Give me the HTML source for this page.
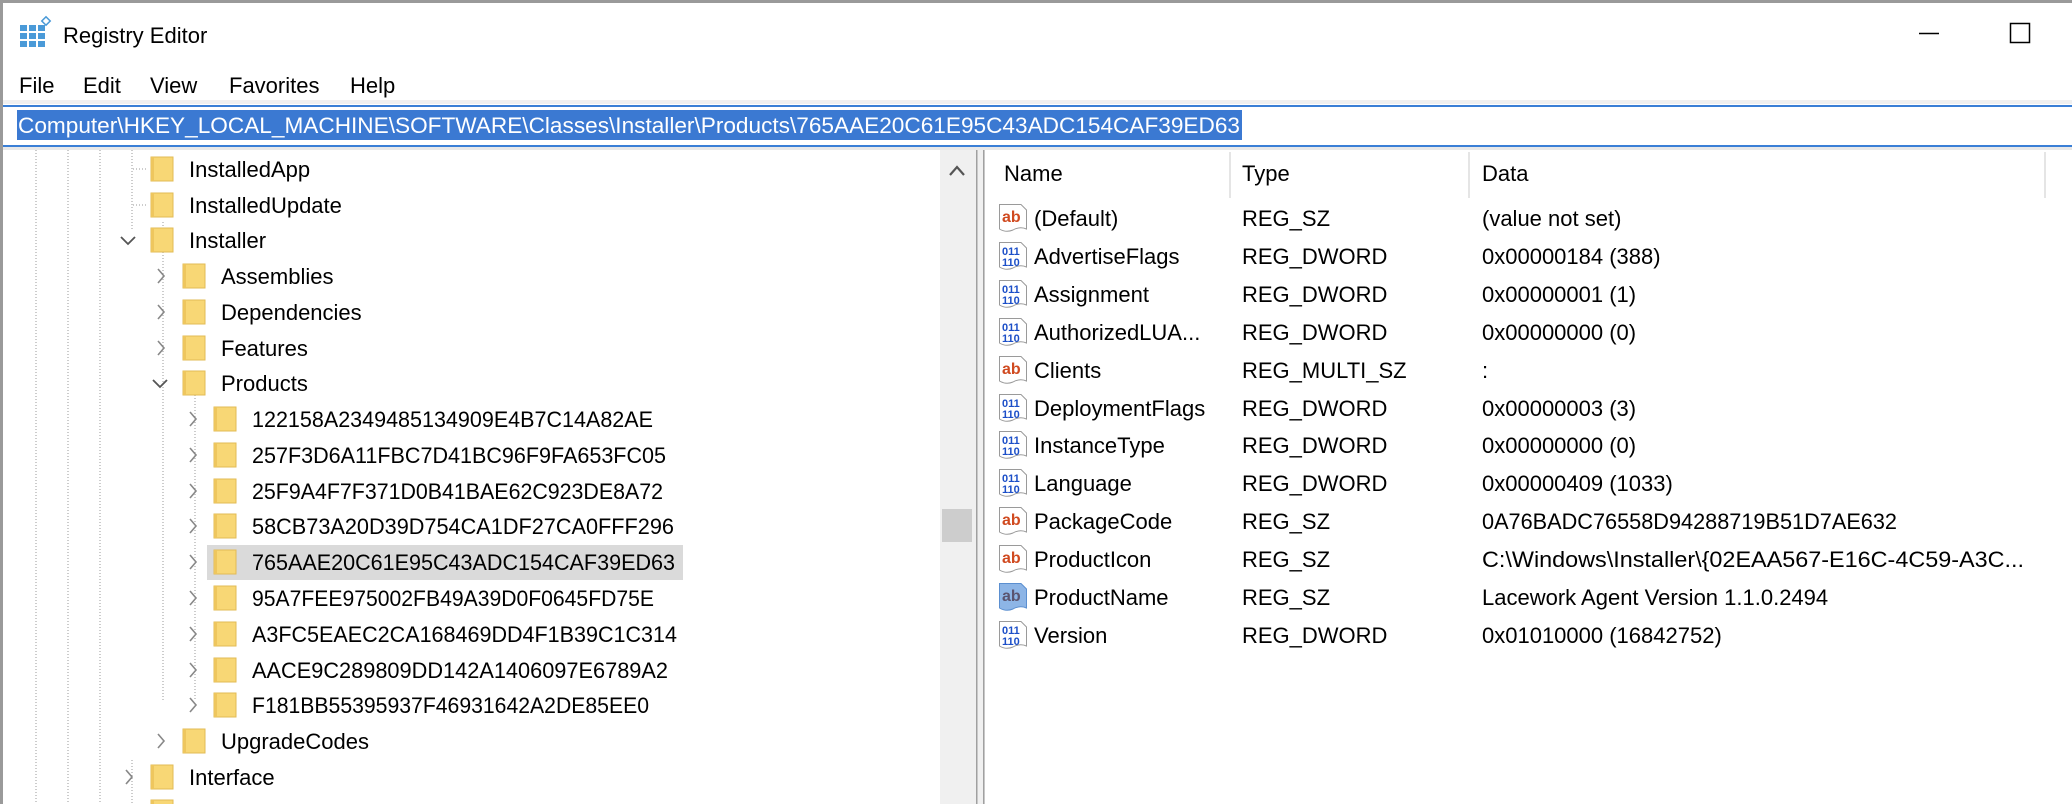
<!DOCTYPE html>
<html><head><meta charset="utf-8"><style>
html,body{margin:0;padding:0;background:#fff;overflow:hidden}
svg{display:block}
text{font-family:"Liberation Sans",sans-serif;font-size:22px;fill:#000}
</style></head><body>
<svg width="2072" height="804" viewBox="0 0 2072 804" xmlns="http://www.w3.org/2000/svg">
<defs>
<g id="fold"><rect x="0" y="-12" width="22" height="24" fill="#f8d775" stroke="#e2bb55" stroke-width="1"/><rect x="0" y="-12" width="3" height="24" fill="#eec65e"/></g>
<g id="chev"><path d="M-3,-7 L3,0 L-3,7" fill="none" stroke="#888" stroke-width="1.6"/></g>
<g id="abi"><path d="M0.5,-13.5 H22 L27.5,-8 V11 Q21,8 14,12 Q7,15 0.5,11 Z" fill="#fff" stroke="#9a9a9a" stroke-width="1"/><text x="3" y="4" style="font-size:16px;font-weight:bold;fill:#d04a20">ab</text></g>
<g id="abb"><path d="M0.5,-13.5 H22 L27.5,-8 V11 Q21,8 14,12 Q7,15 0.5,11 Z" fill="#8db5e6" stroke="#5b8fd0" stroke-width="1"/><text x="3" y="4" style="font-size:16px;font-weight:bold;fill:#5a5470">ab</text></g>
<g id="bin"><path d="M0.5,-13.5 H22 L27.5,-8 V11 Q21,8 14,12 Q7,15 0.5,11 Z" fill="#fff" stroke="#9a9a9a" stroke-width="1"/><text x="3" y="-1" style="font-size:11px;font-weight:bold;fill:#1c4fc8">011</text><text x="3" y="10" style="font-size:11px;font-weight:bold;fill:#1c4fc8">110</text></g>
</defs>
<!-- window border -->
<rect x="0" y="0" width="2072" height="3" fill="#9a9a9a"/>
<rect x="0" y="0" width="3" height="804" fill="#9a9a9a"/>
<!-- title icon -->
<g fill="#4a9ad8"><rect x="20" y="25" width="7" height="6"/><rect x="29" y="25" width="7" height="6"/><rect x="38" y="25" width="7" height="6"/><rect x="20" y="33" width="7" height="6"/><rect x="29" y="33" width="7" height="6"/><rect x="38" y="33" width="7" height="6"/><rect x="20" y="41" width="7" height="6"/><rect x="29" y="41" width="7" height="6"/><rect x="38" y="41" width="7" height="6"/></g>
<rect x="43" y="18" width="6" height="6" fill="#fff" stroke="#4a9ad8" stroke-width="1.5" transform="rotate(45 46 21)"/>
<text x="63" y="43">Registry Editor</text>
<line x1="1919" y1="33.5" x2="1939" y2="33.5" stroke="#000" stroke-width="1.5"/>
<rect x="2010.5" y="23.5" width="19" height="19" fill="none" stroke="#000" stroke-width="1.5"/>
<!-- menu -->
<text x="19" y="93">File</text><text x="83" y="93">Edit</text><text x="150" y="93">View</text><text x="229" y="93">Favorites</text><text x="350" y="93">Help</text>
<rect x="3" y="100" width="2069" height="4" fill="#f0f0f0"/>
<!-- address bar -->
<rect x="3" y="105" width="2069" height="2" fill="#3a7fd6"/>
<rect x="3" y="145" width="2069" height="2" fill="#3a7fd6"/>
<rect x="17" y="110" width="1225" height="30" fill="#3b79d2"/>
<text x="18" y="133" textLength="1222" lengthAdjust="spacingAndGlyphs" style="fill:#fff">Computer\HKEY_LOCAL_MACHINE\SOFTWARE\Classes\Installer\Products\765AAE20C61E95C43ADC154CAF39ED63</text>
<rect x="3" y="147" width="2069" height="3" fill="#e8e8e8"/>
<!-- tree scrollbar & splitter -->
<rect x="940" y="150" width="35" height="654" fill="#f0f0f0"/>
<path d="M950,175 L957,167 L964,175" fill="none" stroke="#555" stroke-width="2.2"/>
<rect x="942" y="509" width="30" height="33" fill="#cdcdcd"/>
<rect x="975" y="150" width="10" height="654" fill="#f0f0f0"/>
<rect x="976" y="150" width="1.5" height="654" fill="#a0a0a0"/>
<rect x="983" y="150" width="1.5" height="654" fill="#a0a0a0"/>
<!-- dotted tree lines -->
<g stroke="#999" stroke-width="1" stroke-dasharray="1,2">
<line x1="36" y1="150" x2="36" y2="804"/><line x1="68" y1="150" x2="68" y2="804"/><line x1="100" y1="150" x2="100" y2="804"/><line x1="132" y1="150" x2="132" y2="230"/><line x1="132" y1="760" x2="132" y2="804"/>
<line x1="133" y1="169" x2="146" y2="169"/><line x1="133" y1="205" x2="146" y2="205"/>
<line x1="163" y1="222" x2="163" y2="700"/><line x1="195" y1="383" x2="195" y2="700"/>
</g>
<!-- selected row -->
<rect x="207" y="545" width="476" height="35" fill="#dadada"/>
<!-- tree rows -->
<g>
<use href="#fold" x="151" y="169"/><text x="189" y="177">InstalledApp</text>
<use href="#fold" x="151" y="205"/><text x="189" y="213">InstalledUpdate</text>
<path d="M121,237 L128,244 L135,237" fill="none" stroke="#555" stroke-width="1.8"/><use href="#fold" x="151" y="240"/><text x="189" y="248">Installer</text>
<use href="#chev" x="161" y="276"/><use href="#fold" x="183" y="276"/><text x="221" y="284">Assemblies</text>
<use href="#chev" x="161" y="312"/><use href="#fold" x="183" y="312"/><text x="221" y="320">Dependencies</text>
<use href="#chev" x="161" y="348"/><use href="#fold" x="183" y="348"/><text x="221" y="356">Features</text>
<path d="M153,380 L160,387 L167,380" fill="none" stroke="#555" stroke-width="1.8"/><use href="#fold" x="183" y="383"/><text x="221" y="391">Products</text>
<use href="#chev" x="193" y="419"/><use href="#fold" x="214" y="419"/><text x="252" y="427" textLength="401" lengthAdjust="spacingAndGlyphs">122158A2349485134909E4B7C14A82AE</text>
<use href="#chev" x="193" y="455"/><use href="#fold" x="214" y="455"/><text x="252" y="463" textLength="414" lengthAdjust="spacingAndGlyphs">257F3D6A11FBC7D41BC96F9FA653FC05</text>
<use href="#chev" x="193" y="491"/><use href="#fold" x="214" y="491"/><text x="252" y="499" textLength="411" lengthAdjust="spacingAndGlyphs">25F9A4F7F371D0B41BAE62C923DE8A72</text>
<use href="#chev" x="193" y="526"/><use href="#fold" x="214" y="526"/><text x="252" y="534" textLength="422" lengthAdjust="spacingAndGlyphs">58CB73A20D39D754CA1DF27CA0FFF296</text>
<use href="#chev" x="193" y="562"/><use href="#fold" x="214" y="562"/><text x="252" y="570" textLength="423" lengthAdjust="spacingAndGlyphs">765AAE20C61E95C43ADC154CAF39ED63</text>
<use href="#chev" x="193" y="598"/><use href="#fold" x="214" y="598"/><text x="252" y="606" textLength="402" lengthAdjust="spacingAndGlyphs">95A7FEE975002FB49A39D0F0645FD75E</text>
<use href="#chev" x="193" y="634"/><use href="#fold" x="214" y="634"/><text x="252" y="642" textLength="425" lengthAdjust="spacingAndGlyphs">A3FC5EAEC2CA168469DD4F1B39C1C314</text>
<use href="#chev" x="193" y="670"/><use href="#fold" x="214" y="670"/><text x="252" y="678" textLength="416" lengthAdjust="spacingAndGlyphs">AACE9C289809DD142A1406097E6789A2</text>
<use href="#chev" x="193" y="705"/><use href="#fold" x="214" y="705"/><text x="252" y="713" textLength="397" lengthAdjust="spacingAndGlyphs">F181BB55395937F46931642A2DE85EE0</text>
<use href="#chev" x="161" y="741"/><use href="#fold" x="183" y="741"/><text x="221" y="749">UpgradeCodes</text>
<use href="#chev" x="129" y="777"/><use href="#fold" x="151" y="777"/><text x="189" y="785">Interface</text>
<use href="#fold" x="151" y="812"/>
</g>
<!-- right pane header -->
<g fill="#e5e5e5"><rect x="1229" y="152" width="2" height="46"/><rect x="1468" y="152" width="2" height="46"/><rect x="2044" y="152" width="2" height="46"/></g>
<text x="1004" y="181">Name</text><text x="1242" y="181">Type</text><text x="1482" y="181">Data</text>
<!-- values -->
<g>
<use href="#abi" x="999" y="218"/><text x="1034" y="226">(Default)</text><text x="1242" y="226">REG_SZ</text><text x="1482" y="226">(value not set)</text>
<use href="#bin" x="999" y="256"/><text x="1034" y="264">AdvertiseFlags</text><text x="1242" y="264">REG_DWORD</text><text x="1482" y="264">0x00000184 (388)</text>
<use href="#bin" x="999" y="294"/><text x="1034" y="302">Assignment</text><text x="1242" y="302">REG_DWORD</text><text x="1482" y="302">0x00000001 (1)</text>
<use href="#bin" x="999" y="332"/><text x="1034" y="340">AuthorizedLUA...</text><text x="1242" y="340">REG_DWORD</text><text x="1482" y="340">0x00000000 (0)</text>
<use href="#abi" x="999" y="370"/><text x="1034" y="378">Clients</text><text x="1242" y="378">REG_MULTI_SZ</text><text x="1482" y="378">:</text>
<use href="#bin" x="999" y="408"/><text x="1034" y="416">DeploymentFlags</text><text x="1242" y="416">REG_DWORD</text><text x="1482" y="416">0x00000003 (3)</text>
<use href="#bin" x="999" y="445"/><text x="1034" y="453">InstanceType</text><text x="1242" y="453">REG_DWORD</text><text x="1482" y="453">0x00000000 (0)</text>
<use href="#bin" x="999" y="483"/><text x="1034" y="491">Language</text><text x="1242" y="491">REG_DWORD</text><text x="1482" y="491">0x00000409 (1033)</text>
<use href="#abi" x="999" y="521"/><text x="1034" y="529">PackageCode</text><text x="1242" y="529">REG_SZ</text><text x="1482" y="529" textLength="415" lengthAdjust="spacingAndGlyphs">0A76BADC76558D94288719B51D7AE632</text>
<use href="#abi" x="999" y="559"/><text x="1034" y="567">ProductIcon</text><text x="1242" y="567">REG_SZ</text><text x="1482" y="567" textLength="542" lengthAdjust="spacingAndGlyphs">C:\Windows\Installer\{02EAA567-E16C-4C59-A3C...</text>
<use href="#abb" x="999" y="597"/><text x="1034" y="605">ProductName</text><text x="1242" y="605">REG_SZ</text><text x="1482" y="605">Lacework Agent Version 1.1.0.2494</text>
<use href="#bin" x="999" y="635"/><text x="1034" y="643">Version</text><text x="1242" y="643">REG_DWORD</text><text x="1482" y="643">0x01010000 (16842752)</text>
</g>
</svg>
</body></html>
